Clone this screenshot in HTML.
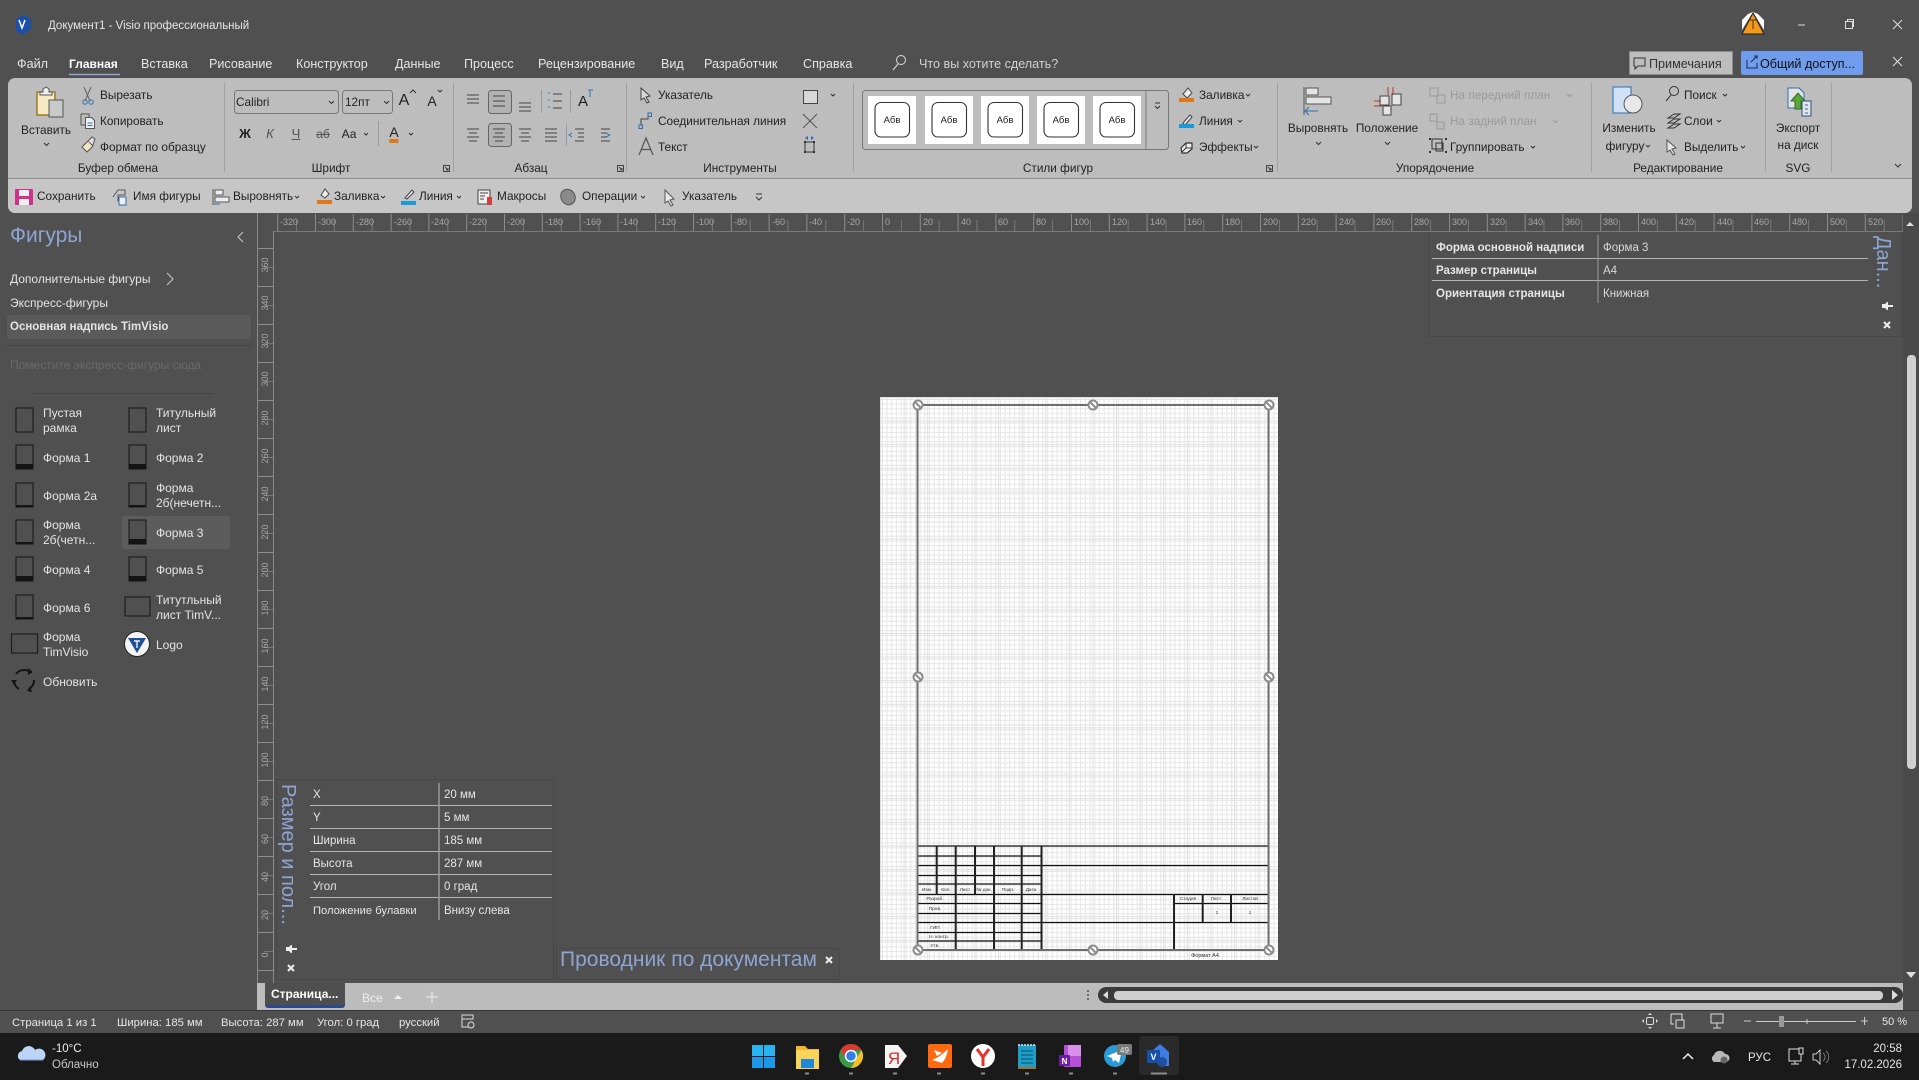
<!DOCTYPE html>
<html lang="ru"><head><meta charset="utf-8"><title>Visio</title>
<style>
html,body{margin:0;padding:0;width:1919px;height:1080px;overflow:hidden;background:#505050;font-family:"Liberation Sans","Noto Sans CJK SC",sans-serif}
.b{position:absolute}
p{position:absolute;margin:1px 0 0;white-space:nowrap;line-height:14px;font-size:11.5px;color:#e6e6e6}
.c{transform:translateX(-50%)}
.r p{color:#222;font-size:11.8px;margin-top:0}
.g{color:#9a9a9a!important}
.l{color:#333!important}
.s p{color:#e4e4e4;font-size:12px;margin-top:0}
.x{font-weight:bold}
.tb{font-size:12.6px;margin-top:0}
svg{position:absolute;left:0;top:0}
</style></head><body>
<div class="b" style="left:8px;top:78px;width:1904px;height:135px;background:#bdbdbd;border-radius:7px"></div>
<div class="b" style="left:8px;top:178px;width:1904px;height:35px;background:#c6c6c6;border-radius:0 0 7px 7px;border-top:1px solid #8f8f8f;box-sizing:border-box"></div>
<div class="b" style="left:1629px;top:51px;width:104px;height:24px;background:#bdbdbd;border:1px solid #8a8a8a;box-sizing:border-box"></div>
<div class="b" style="left:1741px;top:51px;width:122px;height:24px;background:#6f9cec;border-radius:2px"></div>
<div class="b" style="left:7px;top:315px;width:244px;height:24px;background:#5a5a5a;border-radius:3px"></div>
<div class="b" style="left:122px;top:516px;width:108px;height:33px;background:#5c5c5c;border-radius:3px"></div>
<div class="b" style="left:1428px;top:231px;width:475px;height:106px;border:1px solid #484848;box-sizing:border-box"></div>
<div class="b" style="left:276px;top:779px;width:278px;height:201px;border:1px solid #484848;box-sizing:border-box"></div>
<div class="b" style="left:556px;top:948px;width:284px;height:32px;border:1px solid #484848;box-sizing:border-box"></div>
<div class="b" style="left:1903px;top:213px;width:16px;height:797px;background:#4a4a4a"></div>
<div class="b" style="left:1907px;top:355px;width:9px;height:414px;background:#d0d0d0;border-radius:4px"></div>
<div class="b" style="left:257px;top:983px;width:1646px;height:27px;background:#bcbcbc"></div>
<div class="b" style="left:265px;top:983px;width:80px;height:25px;background:#4f4f4f;border-radius:0 0 3px 3px;box-sizing:border-box;border-bottom:3px solid #2b4a8a"></div>
<div class="b" style="left:1098px;top:987px;width:805px;height:16px;background:#3a3a3a;border-radius:8px"></div>
<div class="b" style="left:1114px;top:991px;width:769px;height:9px;background:#cfcfcf;border-radius:4px"></div>
<div class="b" style="left:0;top:1010px;width:1919px;height:23px;background:#505050;border-top:1px solid #363636;box-sizing:border-box"></div>
<div class="b" style="left:0;top:1033px;width:1919px;height:47px;background:#1a1a1a"></div>
<div class="b" style="left:1139px;top:1036px;width:40px;height:39px;background:#2a2a2a;border-radius:4px"></div>

<svg width="1919" height="1080" viewBox="0 0 1919 1080" font-family="Liberation Sans, sans-serif">
<defs>
<pattern id="hr" patternUnits="userSpaceOnUse" x="882" y="214" width="37.8" height="17"><path d="M.5 0V17" stroke="#8c8c8c"/><path d="M19.4 6V17" stroke="#777"/></pattern>
<pattern id="vr" patternUnits="userSpaceOnUse" x="257" y="818" width="16" height="38"><path d="M0 .5H16" stroke="#8c8c8c"/><path d="M7 19.5H16" stroke="#777"/></pattern>
<pattern id="gr" patternUnits="userSpaceOnUse" x="880" y="397" width="23.6" height="23.6"><rect width="23.6" height="23.6" fill="#fff"/><path d="M2.4 0V23.6M7.1 0V23.6M11.8 0V23.6M16.5 0V23.6M21.2 0V23.6M0 2.4H23.6M0 7.1H23.6M0 11.8H23.6M0 16.5H23.6M0 21.2H23.6" stroke="#e6e6e6"/><path d="M0 .5H23.6M.5 0V23.6" stroke="#e0e0e0"/></pattern>
</defs>

<!-- rulers -->
<rect x="273" y="214" width="1630" height="17" fill="url(#hr)"/>
<path d="M273 231.5H1903" stroke="#7a7a7a"/>
<rect x="257" y="231" width="16" height="752" fill="url(#vr)"/>
<path d="M257.5 213V983M273.5 231V983" stroke="#8a8a8a"/>
<g font-size="9" fill="#a8a8a8">
<text x="280" y="225">-320</text><text x="318" y="225">-300</text><text x="356" y="225">-280</text><text x="394" y="225">-260</text><text x="431" y="225">-240</text><text x="469" y="225">-220</text><text x="507" y="225">-200</text><text x="545" y="225">-180</text><text x="583" y="225">-160</text><text x="620" y="225">-140</text><text x="658" y="225">-120</text><text x="696" y="225">-100</text><text x="734" y="225">-80</text><text x="772" y="225">-60</text><text x="809" y="225">-40</text><text x="847" y="225">-20</text><text x="885" y="225">0</text><text x="923" y="225">20</text><text x="961" y="225">40</text><text x="998" y="225">60</text><text x="1036" y="225">80</text><text x="1074" y="225">100</text><text x="1112" y="225">120</text><text x="1150" y="225">140</text><text x="1187" y="225">160</text><text x="1225" y="225">180</text><text x="1263" y="225">200</text><text x="1301" y="225">220</text><text x="1339" y="225">240</text><text x="1376" y="225">260</text><text x="1414" y="225">280</text><text x="1452" y="225">300</text><text x="1490" y="225">320</text><text x="1528" y="225">340</text><text x="1565" y="225">360</text><text x="1603" y="225">380</text><text x="1641" y="225">400</text><text x="1679" y="225">420</text><text x="1717" y="225">440</text><text x="1754" y="225">460</text><text x="1792" y="225">480</text><text x="1830" y="225">500</text><text x="1868" y="225">520</text>
</g>
<g font-size="9" fill="#a8a8a8" text-anchor="middle">
<text transform="translate(268,265) rotate(-90)">360</text><text transform="translate(268,303) rotate(-90)">340</text><text transform="translate(268,341) rotate(-90)">320</text><text transform="translate(268,379) rotate(-90)">300</text><text transform="translate(268,418) rotate(-90)">280</text><text transform="translate(268,456) rotate(-90)">260</text><text transform="translate(268,494) rotate(-90)">240</text><text transform="translate(268,532) rotate(-90)">220</text><text transform="translate(268,570) rotate(-90)">200</text><text transform="translate(268,608) rotate(-90)">180</text><text transform="translate(268,646) rotate(-90)">160</text><text transform="translate(268,684) rotate(-90)">140</text><text transform="translate(268,722) rotate(-90)">120</text><text transform="translate(268,760) rotate(-90)">100</text><text transform="translate(268,801) rotate(-90)">80</text><text transform="translate(268,839) rotate(-90)">60</text><text transform="translate(268,877) rotate(-90)">40</text><text transform="translate(268,915) rotate(-90)">20</text><text transform="translate(268,955) rotate(-90)">0</text>
</g>

<!-- page -->
<rect x="880" y="397" width="398" height="563" fill="url(#gr)"/>
<path d="M917 846H1269M1042 865.5H1269M917 856H1041M917 865.5H1041M917 875.5H1041M917 884H1041M917 894.5H1269M1174 903.5H1269M917 903.5H1041M917 913.5H1041M917 922.5H1269M917 932.5H1041M917 941H1041" stroke="#111" stroke-width="1.3" fill="none"/>
<path d="M936.7 846V894M955.7 846V950M975 846V894M994 846V950M1021.7 846V950M1041.5 846V950M1174 894V950M1202.7 894V922M1231 894V922" stroke="#222" stroke-width="2" fill="none"/>
<rect x="917.500" y="405" width="351" height="545" fill="none" stroke="#6e6e6e" stroke-width="2"/>
<g font-size="4.8" fill="#333" text-anchor="middle">
<text x="927" y="891">Изм.</text><text x="946" y="891">Кол.</text><text x="965" y="891">Лист</text><text x="984" y="891">№ док.</text><text x="1008" y="891">Подп.</text><text x="1031" y="891">Дата</text>
<text x="935" y="900">Разраб.</text><text x="935" y="910">Пров.</text><text x="935" y="929">ГИП</text><text x="939" y="938">Н. контр.</text><text x="935" y="947">Утв.</text>
<text x="1188" y="900">Стадия</text><text x="1216" y="900">Лист</text><text x="1250" y="900">Листов</text><text x="1217" y="914">1</text><text x="1250" y="914">1</text><text x="1205" y="957" font-size="5.5">Формат   А4</text>
</g>
<g fill="#fff" stroke="#8c8c8c" stroke-width="2">
<circle cx="918" cy="405" r="4.5"/><circle cx="1093" cy="405" r="4.5"/><circle cx="1269" cy="405" r="4.5"/><circle cx="918" cy="677" r="4.5"/><circle cx="1269" cy="677" r="4.5"/><circle cx="918" cy="950" r="4.5"/><circle cx="1093" cy="950" r="4.5"/><circle cx="1269" cy="950" r="4.5"/>
<path d="M915 402l6 6M1090 402l6 6M1266 402l6 6M915 674l6 6M1266 674l6 6M915 947l6 6M1090 947l6 6M1266 947l6 6" fill="none"/>
</g>

<!-- panel lines -->
<path d="M1432 258.5H1868M1432 280.5H1868" stroke="#b4b4b4"/><path d="M1598 235V303" stroke="#9a9a9a"/>
<path d="M310 805.5H552M310 828.5H552M310 851.5H552M310 874.5H552M310 897.5H552" stroke="#b4b4b4"/><path d="M439 783V920" stroke="#9a9a9a" stroke-width="1.5"/>
<path d="M7 345.5H251" stroke="#444"/><path d="M32 393.5H213" stroke="#444"/>
<g fill="#eee" stroke="none"><path d="M1882 304h3l2-2 1 0v8l-1 0-2-2h-3zM1888 305h5v2h-5z"/><path d="M286 947h3l2-2 1 0v8l-1 0-2-2h-3zM292 948h5v2h-5z"/></g>
<path d="M1884 322l6 6m0-6l-6 6M288 965l6 6m0-6l-6 6M826 957l6 6m0-6l-6 6" stroke="#eee" stroke-width="2" fill="none"/>

<!-- title bar icons -->
<path d="M23 15l8 4v10l-8 6-7-4V19z" fill="#1c4fa8"/><path d="M19 20l3 8 3-8" stroke="#fff" stroke-width="1.5" fill="none"/>
<path d="M1753 13l11 21h-22z" fill="#f39a1e" stroke="#222"/><path d="M1749 20h8M1753 20v9" stroke="#5a3200" stroke-width="1"/>
<path d="M1742 20l6-6 5-2-11 18zM1764 20l-6-6-5-2 11 18z" fill="#fff"/>
<path d="M1798 25h7" stroke="#ddd"/><path d="M1845.5 21.5h7v7h-7zM1847.5 21.5v-2h6v7h-1" stroke="#ddd" fill="none"/>
<path d="M1893 20l9 9m0-9l-9 9M1893 57l9 9m0-9l-9 9" stroke="#ddd" fill="none"/>
<circle cx="901" cy="60" r="4.5" stroke="#ddd" fill="none"/><path d="M898 64l-5 6" stroke="#ddd"/>
<path d="M1634 58h11v8h-7l-3 3v-3h-1z" stroke="#333" fill="none"/>
<path d="M1747 60v8h10v-5M1751 62l6-6m-3 0h3v3" stroke="#1a2a50" fill="none"/>

<!-- clipboard group -->
<rect x="37" y="92" width="18" height="23" fill="#f6e9c4" stroke="#9b7b26" stroke-width="1.5"/><path d="M43 92v-3l3-2 3 2v3h3v3h-12v-3z" fill="#eee" stroke="#555"/>
<rect x="49" y="100" width="14" height="17" fill="#c9c9c9" stroke="#555"/>
<path d="M84 87l6 14M91 87l-6 14" stroke="#666" fill="none"/><circle cx="85" cy="102" r="2.2" fill="none" stroke="#2a6fb5"/><circle cx="91" cy="102" r="2.2" fill="none" stroke="#2a6fb5"/>
<path d="M81 114h8v3M81 114v11h4" stroke="#555" fill="none"/><path d="M85.5 117.5h6l3 3v8h-9z" fill="#eee" stroke="#555"/><path d="M87.5 123h5M87.5 125.5h5" stroke="#2a6fb5"/>
<path d="M82 147l6-6 5 5-6 6z" fill="#f4e8c2" stroke="#555"/><path d="M88 141l4-4 3 2-2 6" fill="#ddd" stroke="#555"/>
<!-- separators -->
<path d="M224.5 83V172M453.5 83V172M626.5 83V172M853.5 83V172M1277.5 83V172M1591.5 83V172M1765.5 83V172M1831.5 83V172" stroke="#a0a0a0"/>
<path d="M541.5 90V113M570.5 90V113M378.5 121V146M566.5 124V146" stroke="#9a9a9a"/>
<!-- font fields -->
<rect x="234.5" y="90.5" width="104" height="23" rx="3" fill="#bdbdbd" stroke="#777"/><rect x="342.5" y="90.5" width="50" height="23" rx="3" fill="#bdbdbd" stroke="#777"/>
<!-- chevrons -->
<path d="M44 143l2.5 2.5 2.5-2.5M329 101l2.5 2.5 2.5-2.5M384 101l2.5 2.5 2.5-2.5M364 133l2 2 2-2M409 133l2 2 2-2M831 94l2 2 2-2M1246 94l2 2 2-2M1238 120l2 2 2-2M1254 146l2 2 2-2M1316 142l2.5 2.5 2.5-2.5M1385 142l2.5 2.5 2.5-2.5M1531 146l2 2 2-2M1646 145l2 2 2-2M1723 94l2 2 2-2M1717 120l2 2 2-2M1741 146l2 2 2-2M1895 164l3 3 3-3M295 196l2 2 2-2M381 196l2 2 2-2M457 196l2 2 2-2M641 196l2 2 2-2M756 194h6M756 197l3 3 3-3" stroke="#333" fill="none"/>
<path d="M1567 94l2.5 2.5 2.5-2.5M1553 120l2.5 2.5 2.5-2.5" stroke="#999" fill="none"/>
<path d="M410 93l3-3 3 3" stroke="#333" fill="none"/><path d="M438 90l2 2 2-2" stroke="#333" fill="none"/>
<!-- launchers -->
<path d="M443.5 165.5h6v6h-6zM445 167l3 3M448 168v2h-2M617.5 165.5h6v6h-6zM619 167l3 3M622 168v2h-2M1266.5 165.5h6v6h-6zM1268 167l3 3M1271 168v2h-2" stroke="#444" fill="none"/>
<!-- paragraph -->
<rect x="488.5" y="90.5" width="23" height="23" rx="3" fill="#b2b2b2" stroke="#666"/><rect x="488.5" y="123.5" width="23" height="23" rx="3" fill="#b2b2b2" stroke="#666"/>
<path d="M467 95h12M467 99h12M467 103h12M493 96h12M493 101h12M493 106h12M519 103h12M519 107h12M519 111h12M467 129h12M469 133h8M467 137h12M469 141h8M493 129h12M495 133h8M493 137h12M495 141h8M519 129h12M521 133h8M519 137h12M521 141h8M545 129h12M545 133h12M545 137h12M545 141h12" stroke="#444" fill="none"/>
<path d="M553 94h9M553 101h9M553 108h9M575 129h9M578 133h6M578 137h6M575 141h9M601 129h9M601 133h6M601 137h6M601 141h9" stroke="#444" fill="none"/>
<path d="M548 93h2M548 100h2M548 107h2M572 133l-3 2 3 2M606 133l4 2-4 2" stroke="#2a7ac0" fill="none"/>
<path d="M588 90h5m-3 0v7" stroke="#2a7ac0" fill="none"/>
<!-- tools -->
<path d="M641 88v12l3-2 3 5 2-1-3-5 4-1z" fill="#d8d8d8" stroke="#444"/>
<path d="M641 125v-6h7v-3" stroke="#444" fill="none"/><rect x="648" y="113" width="3.500" height="3.500" fill="none" stroke="#2a6fb5"/><rect x="639" y="125" width="3.500" height="3.500" fill="none" stroke="#2a6fb5"/>
<rect x="803.5" y="90.5" width="14" height="13" fill="#d8d8d8" stroke="#444"/>
<path d="M803 114l14 14M817 114l-14 14" stroke="#555" fill="none"/>
<path d="M805 142h9v10h-9z" stroke="#333" fill="none"/><path d="M804 141h2v2h-2zM813 141h2v2h-2zM804 151h2v2h-2zM813 151h2v2h-2z" fill="#333"/><path d="M805 138l3-2v4zM814 138l-3-2v4z" fill="#2a6fb5"/>
<path d="M639 155l7-17 7 17M641.500 149.500h9" stroke="#555" fill="none" stroke-width="1.2"/>
<!-- gallery -->
<rect x="862.5" y="90.5" width="306" height="59" rx="3" fill="#bdbdbd" stroke="#777"/><path d="M1146 90V150" stroke="#777"/>
<path d="M1155 103h5M1155 106l2.500 2.500 2.500-2.500" stroke="#333" fill="none"/>
<g fill="#fff"><rect x="868" y="96" width="48" height="48"/><rect x="925" y="96" width="48" height="48"/><rect x="981" y="96" width="48" height="48"/><rect x="1037" y="96" width="48" height="48"/><rect x="1093" y="96" width="48" height="48"/></g>
<g fill="none" stroke="#333" stroke-width="1.1"><rect x="875" y="102.5" width="34.5" height="34.5" rx="6"/><rect x="932" y="102.5" width="34.5" height="34.5" rx="6"/><rect x="988" y="102.5" width="34.5" height="34.5" rx="6"/><rect x="1044" y="102.5" width="34.5" height="34.5" rx="6"/><rect x="1100" y="102.5" width="34.5" height="34.5" rx="6"/></g>
<g font-size="9.5" fill="#222" text-anchor="middle"><text x="892" y="123">Абв</text><text x="949" y="123">Абв</text><text x="1005" y="123">Абв</text><text x="1061" y="123">Абв</text><text x="1117" y="123">Абв</text></g>
<!-- fill line effects -->
<path d="M1183 94l5-6 4 5-5 5z" fill="#eee" stroke="#444"/><rect x="1179" y="98" width="15" height="4" fill="#e07818"/>
<path d="M1183 123l7-8 2 2-7 8z" fill="#eee" stroke="#444"/><rect x="1179" y="124" width="15" height="4" fill="#1a9bd8"/>
<path d="M1181 148l5-5h6v6l-5 4h-5z" fill="#eee" stroke="#333" stroke-width="1.2"/><path d="M1186 143v5h6M1186 148l-4 4" stroke="#333" fill="none"/>
<!-- arrange -->
<path d="M1304 87V115" stroke="#555"/><rect x="1306" y="88" width="12" height="7" fill="#e4e4e4" stroke="#555"/><rect x="1306" y="97" width="25" height="7" fill="#e4e4e4" stroke="#555"/><path d="M1318 111h-13m4-4l-4 4 4 4" stroke="#2a6fb5" fill="none"/>
<rect x="1380" y="96" width="9" height="9" fill="#e4e4e4" stroke="#444"/><rect x="1392" y="94" width="9" height="11" fill="#e4e4e4" stroke="#444"/><rect x="1383" y="106" width="8" height="9" fill="#e4e4e4" stroke="#444"/>
<path d="M1388 87v8M1393 87v8M1374 101h7M1374 106h8" stroke="#c03030" fill="none"/>
<path d="M1430 88h8v8h-8zM1437 95h8v8h-8z" stroke="#999" fill="none"/><path d="M1430 114h7v7h-7z" stroke="#999" fill="none"/><rect x="1437" y="122" width="7" height="7" fill="#bbb" stroke="#999"/>
<path d="M1432 139h10v10h-10z" stroke="#333" fill="none"/><path d="M1436 143h7v8h-7z" stroke="#333" fill="none"/>
<path d="M1429 138h2v2h-2zM1445 138h2v2h-2zM1429 151h2v2h-2zM1445 151h2v2h-2z" fill="#333"/>
<!-- edit -->
<rect x="1613" y="87" width="18" height="26" fill="#d2e2f6" stroke="#2a6fb5"/><circle cx="1633" cy="104" r="9" fill="#e8e8e8" stroke="#555"/>
<circle cx="1674" cy="91" r="4.5" fill="none" stroke="#333"/><path d="M1671 95l-5 6" stroke="#333"/>
<path d="M1668 118l6-4h6l-6 4zM1668 123l6-4h6l-6 4zM1668 128l6-4h6l-6 4z" fill="none" stroke="#333"/>
<path d="M1667 140v12l3-2 3 5 2-1-3-5 4-1z" fill="#e8e8e8" stroke="#555"/>
<!-- export -->
<path d="M1788 88h11l5 5v15h-16z" fill="#e4e4e4" stroke="#2a6fb5"/><path d="M1795 109v-8h-4l7-8 7 8h-4v8z" fill="#58a83a" stroke="#386a28"/><rect x="1802" y="101" width="9" height="15" fill="#e4e4e4" stroke="#2a4f90"/><path d="M1805 105h3M1805 109h3M1805 113h3" stroke="#2a6fb5"/>
<!-- toolbar -->
<rect x="15" y="189" width="18" height="16" fill="#d0308a" rx="1"/><rect x="19" y="190" width="10" height="6" fill="#eee"/><rect x="19" y="199" width="10" height="6" fill="#eee"/>
<path d="M113 197l5-7 7 0v5h-7v6h5" stroke="#555" fill="none"/><rect x="119" y="197" width="7" height="8" fill="#eee" stroke="#2a6fb5"/>
<path d="M213 189V205" stroke="#555"/><rect x="215" y="190" width="8" height="5" fill="#eee" stroke="#555"/><rect x="215" y="197" width="14" height="5" fill="#eee" stroke="#555"/><path d="M220 204h-6" stroke="#2a6fb5"/>
<path d="M321 195l4-6 4 5-4 4z" fill="#eee" stroke="#444"/><rect x="317" y="200" width="15" height="4" fill="#e07818"/>
<path d="M405 198l7-8 2 2-7 7z" fill="#eee" stroke="#444"/><rect x="401" y="201" width="15" height="4" fill="#1a9bd8"/>
<rect x="478" y="190" width="12" height="14" fill="#eee" stroke="#444"/><path d="M480 193h8M480 196h5M480 199h4" stroke="#444"/><rect x="487" y="197" width="5" height="8" fill="#d04040"/>
<ellipse cx="568" cy="197" rx="7" ry="8" transform="rotate(-30 568 197)" fill="#8a8a8a" stroke="#555"/>
<path d="M665 190v13l3-2 3 5 2-1-3-5 4-1z" fill="#e8e8e8" stroke="#555"/>

<!-- sidebar -->
<path d="M243 232l-5 5 5 5M167 273l6 6-6 6" stroke="#c8c8c8" fill="none" stroke-width="1"/>
<g fill="#505050" stroke="#1c1c1c" stroke-width="1.1">
<rect x="16" y="408" width="17" height="24"/><rect x="129" y="408" width="17" height="24"/>
<rect x="16" y="445" width="17" height="24"/><rect x="129" y="445" width="17" height="24"/>
<rect x="16" y="483" width="17" height="24"/><rect x="129" y="483" width="17" height="24"/>
<rect x="16" y="520" width="17" height="24"/><rect x="129" y="520" width="17" height="24"/>
<rect x="16" y="557" width="17" height="24"/><rect x="129" y="557" width="17" height="24"/>
<rect x="16" y="595" width="17" height="24"/><rect x="125" y="597" width="25" height="19"/>
<rect x="11.500" y="634" width="26" height="19"/>
</g>
<g fill="#141414"><rect x="16" y="464" width="17" height="5"/><rect x="129" y="464" width="17" height="5"/><rect x="16" y="505" width="17" height="2"/><rect x="129" y="505" width="17" height="2"/><rect x="16" y="542" width="17" height="2"/><rect x="129" y="539" width="17" height="5"/><rect x="16" y="576" width="17" height="5"/><rect x="129" y="576" width="17" height="5"/><rect x="16" y="617" width="17" height="2"/></g>
<circle cx="137" cy="644" r="12.5" fill="#f4f4f4" stroke="#222"/><path d="M128 638h18l-9 15z" fill="#1d4f96"/><path d="M134 641h6M137 641v7" stroke="#eee" stroke-width="1.4"/>
<path d="M16 674A10 10 0 0 1 30 672M34 680A10 10 0 0 1 29 689M19 689A10 10 0 0 1 14 680" stroke="#141414" stroke-width="2" fill="none"/>
<path d="M28 668l5 4-5 3zM32 692l-5-1 3-5zM11 680h6l-3 5z" fill="#141414"/>

<!-- tabs bar -->
<path d="M69 74.500H120" stroke="#8ea4d2" stroke-width="1.500"/>
<path d="M394 999l4-4 4 4z" fill="#f0f0f0"/><path d="M426 997h12M432 991v12" stroke="#efefef"/>
<circle cx="1088" cy="991" r="1" fill="#555"/><circle cx="1088" cy="995" r="1" fill="#555"/><circle cx="1088" cy="999" r="1" fill="#555"/>
<path d="M1108 991l-5 4 5 4z" fill="#ddd"/><path d="M1892 990l6 5-6 5z" fill="#ddd"/>
<path d="M1910 222l4 4h-8z" fill="#ddd"/><path d="M1906 972h10l-5 6z" fill="#ddd"/>
<!-- status -->
<path d="M462 1015h11v4h-11zM462 1019v8h7" stroke="#ddd" fill="none"/><circle cx="471" cy="1025" r="3" fill="none" stroke="#ddd"/>
<rect x="1646.500" y="1017.500" width="7" height="7" rx="1.500" fill="none" stroke="#ddd"/><path d="M1650 1013l2 2h-4zM1650 1029l2-2h-4zM1642 1021l2-2v4zM1658 1021l-2-2v4z" fill="#ddd"/>
<path d="M1671 1014h11v6M1671 1014v10h3M1676 1020h8v8h-8z" stroke="#ddd" fill="none"/>
<path d="M1711 1014h12v9h-12zM1717 1023v5M1713 1028h8" stroke="#ddd" fill="none"/>
<path d="M1744 1021h7M1756 1021.500h100M1861 1021h7M1864.500 1017v8M1807 1019v5" stroke="#ccc" fill="none"/>
<rect x="1779" y="1016" width="5" height="11" fill="#9a9a9a"/>

<!-- taskbar -->
<g fill="#28b4f0"><rect x="752" y="1045" width="11" height="11"/><rect x="764" y="1045" width="11" height="11"/></g><g fill="#1c98e8"><rect x="752" y="1057" width="11" height="11"/><rect x="764" y="1057" width="11" height="11"/></g>
<path d="M796 1046h9l3 3h11v20h-23z" fill="#f2b62e"/><rect x="796" y="1050" width="23" height="19" fill="#f9d45a"/><rect x="801" y="1059" width="13" height="9" fill="#1f86d8"/>
<circle cx="851" cy="1056" r="12" fill="#3a9a48"/><path d="M851 1044a12 12 0 0 1 10.400 6h-10.400l-5.200 9-5.200-9a12 12 0 0 1 10.400-6z" fill="#d83a32"/><path d="M861.400 1050a12 12 0 0 1-10.400 18l5.200-9z" fill="#f4c020"/><circle cx="851" cy="1056" r="5.500" fill="#2f80e8" stroke="#fff" stroke-width="1.500"/>
<path d="M885 1045h13l9 11-9 12h-13z" fill="#f4f4f4"/><text x="894" y="1064" font-size="17" fill="#d92c2c" text-anchor="middle">Я</text>
<rect x="928" y="1044" width="24" height="24" rx="2" fill="#ff6a10"/><path d="M932 1060c6-2 12-7 16-11-1 6-3 11-6 14-3-1-6-2-10-3zM934 1050l8 3-5 3z" fill="#fff"/>
<circle cx="983" cy="1056" r="12" fill="#fff"/><path d="M977 1049l6 8 6-8M983 1057v9" stroke="#e8302c" stroke-width="3" fill="none"/>
<rect x="1018" y="1045" width="18" height="24" fill="#1f9fc8"/><path d="M1021 1051h12M1021 1055h12M1021 1059h12M1021 1063h12" stroke="#0b6a8a" stroke-width="1.400"/><path d="M1018 1045h18" stroke="#cfeaf2" stroke-width="1.500" stroke-dasharray="2 1"/><rect x="1018" y="1067" width="18" height="2" fill="#a87030"/>
<rect x="1064" y="1045" width="17" height="22" rx="1" fill="#b84fd8"/><rect x="1068" y="1045" width="13" height="11" fill="#d890ea"/><rect x="1059" y="1055" width="11" height="11" rx="1" fill="#6a1fa0"/><text x="1064.500" y="1064" font-size="8" font-weight="bold" fill="#fff" text-anchor="middle">N</text>
<circle cx="1115" cy="1056" r="11" fill="#2a9bd8"/><path d="M1107 1056l15-6-3 13-4-3-2 2-1-4z" fill="#fff"/><rect x="1117" y="1044" width="15" height="11" rx="2" fill="#7a7a7a"/><text x="1124.500" y="1053" font-size="8" fill="#eee" text-anchor="middle">49</text>
<path d="M1160 1044l9 8v14h-9l-9-14z" fill="#3f7ce0"/><rect x="1147" y="1050" width="13" height="13" rx="1" fill="#174fa8"/><circle cx="1162" cy="1062" r="5" fill="#1f4fa0"/><text x="1153.500" y="1060" font-size="9" font-weight="bold" fill="#fff" text-anchor="middle">V</text>
<path d="M805 1073.500h4M849 1073.500h4M893 1073.500h4M937 1073.500h4M981 1073.500h4M1025 1073.500h4M1069 1073.500h4M1113 1073.500h4" stroke="#8a8a8a" stroke-width="2"/><path d="M1151 1073.500h16" stroke="#8a8a8a" stroke-width="2"/>
<path d="M20 1060a5 5 0 0 1 2-9 7 7 0 0 1 13-1 6 6 0 0 1 8 10z" fill="#bcd4f5"/><path d="M20 1060h23" stroke="#7a9ad8"/>
<path d="M1683 1059l5-5 5 5" stroke="#eee" stroke-width="1.500" fill="none"/>
<path d="M1714 1062a4 4 0 0 1 0-7 6 6 0 0 1 11-1 4 4 0 0 1 1 8z" fill="#b8b8b8"/><circle cx="1724" cy="1060" r="3.500" fill="#666"/>
<path d="M1789 1049h12v12h-12zM1795 1061v3M1791 1064h8" stroke="#ddd" fill="none"/><rect x="1799" y="1048" width="4" height="6" fill="#1a1a1a" stroke="#ddd"/>
<path d="M1813 1054h3l4-4v14l-4-4h-3z" fill="none" stroke="#ccc"/><path d="M1823 1053a5 5 0 0 1 0 8M1826 1051a8 8 0 0 1 0 12" stroke="#777" fill="none"/>
</svg>

<!-- titlebar / tabs -->
<p style="left:48px;top:18px">Документ1 - Visio профессиональный</p>
<p class="tb" style="left:17px;top:57px">Файл</p>
<p class="tb" style="left:69px;top:57px;font-weight:bold;color:#fff;font-size:12px">Главная</p>
<p class="tb" style="left:141px;top:57px">Вставка</p>
<p class="tb" style="left:209px;top:57px">Рисование</p>
<p class="tb" style="left:296px;top:57px">Конструктор</p>
<p class="tb" style="left:395px;top:57px">Данные</p>
<p class="tb" style="left:464px;top:57px">Процесс</p>
<p class="tb" style="left:538px;top:57px">Рецензирование</p>
<p class="tb" style="left:661px;top:57px">Вид</p>
<p class="tb" style="left:704px;top:57px">Разработчик</p>
<p class="tb" style="left:803px;top:57px">Справка</p>
<p class="tb" style="left:919px;top:57px;color:#d0d0d0">Что вы хотите сделать?</p>
<p class="l tb" style="left:1649px;top:57px">Примечания</p>
<p class="tb" style="left:1760px;top:57px;color:#111">Общий доступ...</p>

<!-- ribbon -->
<div class="r">
<p class="c" style="left:46px;top:123px">Вставить</p>
<p style="left:100px;top:88px">Вырезать</p>
<p style="left:100px;top:114px">Копировать</p>
<p style="left:100px;top:140px">Формат по образцу</p>
<p class="c" style="left:118px;top:161px">Буфер обмена</p>
<p style="left:236px;top:95px">Calibri</p>
<p style="left:345px;top:95px">12пт</p>
<p class="c" style="left:404px;top:94px;font-size:16px">A</p>
<p class="c" style="left:432px;top:94px;font-size:14px">A</p>
<p class="c x" style="left:245px;top:127px;font-size:13px">Ж</p>
<p class="c" style="left:270px;top:127px;font-size:13px;font-style:italic;color:#555">К</p>
<p class="c" style="left:296px;top:127px;font-size:13px;text-decoration:underline;color:#555">Ч</p>
<p class="c" style="left:323px;top:127px;font-size:12px;text-decoration:line-through;color:#555">аб</p>
<p class="c" style="left:349px;top:127px;font-size:12px">Аа</p>
<p class="c" style="left:394px;top:125px;font-size:14px;border-bottom:4px solid #e07818;line-height:14px;height:14px">A</p>
<p class="c" style="left:331px;top:161px">Шрифт</p>
<p class="c" style="left:583px;top:95px;font-size:15px">A</p>
<p class="c" style="left:531px;top:161px">Абзац</p>
<p style="left:658px;top:88px">Указатель</p>
<p style="left:658px;top:114px">Соединительная линия</p>
<p style="left:658px;top:140px">Текст</p>
<p class="c" style="left:740px;top:161px">Инструменты</p>
<p style="left:1199px;top:88px">Заливка</p>
<p style="left:1199px;top:114px">Линия</p>
<p style="left:1199px;top:140px">Эффекты</p>
<p class="c" style="left:1058px;top:161px">Стили фигур</p>
<p class="c" style="left:1318px;top:121px">Выровнять</p>
<p class="c" style="left:1387px;top:121px">Положение</p>
<p class="g" style="left:1450px;top:88px">На передний план</p>
<p class="g" style="left:1450px;top:114px">На задний план</p>
<p style="left:1450px;top:140px">Группировать</p>
<p class="c" style="left:1435px;top:161px">Упорядочение</p>
<p class="c" style="left:1629px;top:121px">Изменить</p>
<p class="c" style="left:1625px;top:139px">фигуру</p>
<p style="left:1684px;top:88px">Поиск</p>
<p style="left:1684px;top:114px">Слои</p>
<p style="left:1684px;top:140px">Выделить</p>
<p class="c" style="left:1678px;top:161px">Редактирование</p>
<p class="c" style="left:1798px;top:121px">Экспорт</p>
<p class="c" style="left:1798px;top:138px">на диск</p>
<p class="c" style="left:1798px;top:161px">SVG</p>
<p style="left:37px;top:189px">Сохранить</p>
<p style="left:133px;top:189px">Имя фигуры</p>
<p style="left:233px;top:189px">Выровнять</p>
<p style="left:334px;top:189px">Заливка</p>
<p style="left:419px;top:189px">Линия</p>
<p style="left:497px;top:189px">Макросы</p>
<p style="left:582px;top:189px">Операции</p>
<p style="left:682px;top:189px">Указатель</p>
</div>

<!-- sidebar -->
<div class="s">
<p style="left:10px;top:226px;font-size:21px;line-height:20px;color:#8ea4d2">Фигуры</p>
<p style="left:10px;top:272px">Дополнительные фигуры</p>
<p style="left:10px;top:296px">Экспресс-фигуры</p>
<p class="x" style="left:10px;top:320px;font-size:11.5px">Основная надпись TimVisio</p>
<p style="left:10px;top:358px;color:#6a6a6a">Поместите экспресс-фигуры сюда</p>
<p style="left:43px;top:406px">Пустая</p><p style="left:43px;top:421px">рамка</p>
<p style="left:156px;top:406px">Титульный</p><p style="left:156px;top:421px">лист</p>
<p style="left:43px;top:451px">Форма 1</p><p style="left:156px;top:451px">Форма 2</p>
<p style="left:43px;top:489px">Форма 2а</p>
<p style="left:156px;top:481px">Форма</p><p style="left:156px;top:496px">2б(нечетн...</p>
<p style="left:43px;top:518px">Форма</p><p style="left:43px;top:533px">2б(четн...</p>
<p style="left:156px;top:526px">Форма 3</p>
<p style="left:43px;top:563px">Форма 4</p><p style="left:156px;top:563px">Форма 5</p>
<p style="left:43px;top:601px">Форма 6</p>
<p style="left:156px;top:593px">Титутльный</p><p style="left:156px;top:608px">лист TimV...</p>
<p style="left:43px;top:630px">Форма</p><p style="left:43px;top:645px">TimVisio</p>
<p style="left:156px;top:638px">Logo</p>
<p style="left:43px;top:675px">Обновить</p>
</div>

<!-- data panel -->
<p class="x" style="left:1436px;top:240px">Форма основной надписи</p><p style="left:1603px;top:240px;color:#d8d8d8">Форма 3</p>
<p class="x" style="left:1436px;top:263px">Размер страницы</p><p style="left:1603px;top:263px;color:#d8d8d8">А4</p>
<p class="x" style="left:1436px;top:286px">Ориентация страницы</p><p style="left:1603px;top:286px;color:#d8d8d8">Книжная</p>
<p style="left:1893px;top:235px;font-size:20px;line-height:20px;color:#8ea4d2;transform-origin:0 0;transform:rotate(90deg)">Дан...</p>

<!-- size panel -->
<p style="left:313px;top:787px">X</p><p style="left:444px;top:787px">20 мм</p>
<p style="left:313px;top:810px">Y</p><p style="left:444px;top:810px">5 мм</p>
<p style="left:313px;top:833px">Ширина</p><p style="left:444px;top:833px">185 мм</p>
<p style="left:313px;top:856px">Высота</p><p style="left:444px;top:856px">287 мм</p>
<p style="left:313px;top:879px">Угол</p><p style="left:444px;top:879px">0 град</p>
<p style="left:313px;top:903px;font-size:11.2px">Положение булавки</p><p style="left:444px;top:903px">Внизу слева</p>
<p style="left:298px;top:783px;font-size:20px;line-height:20px;color:#8ea4d2;transform-origin:0 0;transform:rotate(90deg)">Размер и пол...</p>
<p style="left:560px;top:949px;font-size:21px;line-height:20px;color:#8ea4d2">Проводник по документам</p>

<!-- page tabs -->
<p class="x" style="left:271px;top:986px;font-size:12px;color:#fff">Страница...</p>
<p style="left:362px;top:990px;font-size:12px;color:#efefef">Все</p>

<!-- status -->
<p style="left:12px;top:1015px;font-size:11.3px">Страница 1 из 1</p>
<p style="left:117px;top:1015px;font-size:11.3px">Ширина: 185 мм</p>
<p style="left:221px;top:1015px;font-size:11.3px">Высота: 287 мм</p>
<p style="left:317px;top:1015px;font-size:11.3px">Угол: 0 град</p>
<p style="left:399px;top:1015px;font-size:11.3px">русский</p>
<p style="left:1882px;top:1014px;font-size:11px">50 %</p>

<!-- taskbar -->
<p style="left:52px;top:1041px;font-size:11.5px;color:#eee">-10°C</p>
<p style="left:52px;top:1057px;font-size:11.5px;color:#c8c8c8">Облачно</p>
<p style="left:1748px;top:1050px;font-size:11.5px">РУС</p>
<p style="left:1870px;top:1041px;font-size:11.5px;text-align:right;width:32px">20:58</p>
<p style="left:1842px;top:1057px;font-size:11.5px;text-align:right;width:60px">17.02.2026</p>
</body></html>
